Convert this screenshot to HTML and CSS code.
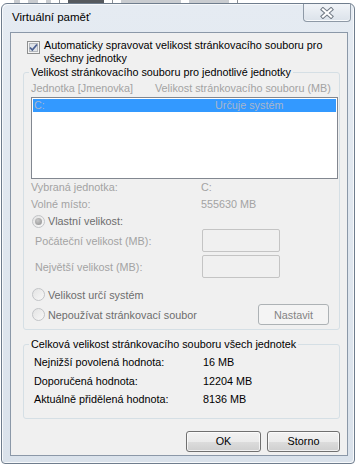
FILE: index.html
```html
<!DOCTYPE html>
<html lang="cs">
<head>
    <meta charset="UTF-8">
    <meta name="viewport" content="width=device-width, initial-scale=1.0">
    <title>Virtuální paměť</title>
    <link rel="stylesheet" href="styles.css">
</head>
<body>
    <div class="behind">
        <span class="frag" style="width: 6px;"></span>
        <span class="frag" style="width: 10px;"></span>
        <span class="frag" style="width: 5px;"></span>
        <span class="sep"></span>
        <span class="frag dark" style="width: 36px;"></span>
        <span class="sep"></span>
        <span class="frag" style="width: 60px;"></span>
        <span class="frag" style="width: 40px;"></span>
        <span class="sep"></span>
    </div>

    <div class="window">
        <div class="titlebar">
            <span class="title">Virtuální paměť</span>
            <button class="close">
                <svg width="14" height="12" viewBox="0 0 14 12">
                    <path d="M3 2.5 L11 9.5 M11 2.5 L3 9.5" stroke="#737c87" stroke-width="4.2" stroke-linecap="square"/>
                    <path d="M3 2.5 L11 9.5 M11 2.5 L3 9.5" stroke="#ffffff" stroke-width="2.2" stroke-linecap="square"/>
                </svg>
            </button>
        </div>

        <div class="client">
            <div class="check-row">
                <span class="checkbox">
                    <svg width="13" height="13" viewBox="0 0 13 13">
                        <rect x="0.5" y="0.5" width="12" height="12" fill="#f4f4f4" stroke="#8e8f8f"/>
                        <rect x="2.5" y="2.5" width="8" height="8" fill="#dfe3e8" stroke="#b4b8bd"/>
                        <path d="M3 6.5 L5.3 9 L10 3.5" fill="none" stroke="#4a5f91" stroke-width="1.8"/>
                    </svg>
                </span>
                <span class="check-text">Automaticky spravovat velikost stránkovacího souboru pro všechny jednotky</span>
            </div>

            <fieldset class="group drives">
                <legend>Velikost stránkovacího souboru pro jednotlivé jednotky</legend>
                <div class="list-head">
                    <span class="col-drive">Jednotka [Jmenovka]</span>
                    <span>Velikost stránkovacího souboru (MB)</span>
                </div>
                <div class="list">
                    <div class="list-item selected">
                        <span class="col-item">C:</span>
                        <span>Určuje systém</span>
                    </div>
                </div>

                <div class="info-row">
                    <span class="info-label">Vybraná jednotka:</span>
                    <span>C:</span>
                </div>
                <div class="info-row">
                    <span class="info-label">Volné místo:</span>
                    <span>555630 MB</span>
                </div>

                <div class="radio-row custom">
                    <span class="radio checked"></span>
                    <span>Vlastní velikost:</span>
                </div>
                <div class="size-row">
                    <span class="size-label">Počáteční velikost (MB):</span>
                    <span class="textbox"></span>
                </div>
                <div class="size-row second">
                    <span class="size-label">Největší velikost (MB):</span>
                    <span class="textbox"></span>
                </div>

                <div class="radio-row system">
                    <span class="radio"></span>
                    <span>Velikost určí systém</span>
                </div>
                <div class="radio-row none">
                    <span class="radio"></span>
                    <span>Nepoužívat stránkovací soubor</span>
                    <button class="btn set" disabled>Nastavit</button>
                </div>
            </fieldset>

            <fieldset class="group totals">
                <legend>Celková velikost stránkovacího souboru všech jednotek</legend>
                <div class="total-row">
                    <span class="total-label">Nejnižší povolená hodnota:</span>
                    <span>16 MB</span>
                </div>
                <div class="total-row">
                    <span class="total-label">Doporučená hodnota:</span>
                    <span>12204 MB</span>
                </div>
                <div class="total-row">
                    <span class="total-label">Aktuálně přidělená hodnota:</span>
                    <span>8136 MB</span>
                </div>
            </fieldset>

            <div class="actions">
                <button class="btn ok">OK</button>
                <button class="btn cancel">Storno</button>
            </div>
        </div>
    </div>
</body>
</html>
```

FILE: styles.css
```css
* {
    box-sizing: border-box;
}

body {
    margin: 0;
    width: 356px;
    height: 465px;
    overflow: hidden;
    background-color: #ffffff;
    font-family: "Liberation Sans", Arial, sans-serif;
    font-size: 10.8px;
    color: #000000;
    white-space: nowrap;
}

/* bits of the window lying behind the dialog */
.behind {
    display: flex;
    height: 3px;
    gap: 8px;
    padding-left: 14px;
}

.behind .frag {
    height: 3px;
    background-color: #c9ccd0;
}

.behind .frag.dark {
    background-color: #55595e;
}

.behind .sep {
    width: 1px;
    height: 3px;
    background-color: #8a8f95;
}

.window {
    margin-left: 1px;
    width: 354px;
    height: 461px;
    border: 1px solid #6f7d8d;
    border-radius: 6px 6px 4px 4px;
    background: linear-gradient(#e5ebf2, #dae2eb);
    box-shadow: inset 1px 1px 0 #f7f9fb, inset -1px -1px 0 #f7f9fb;
}

.titlebar {
    display: flex;
    justify-content: space-between;
    align-items: flex-start;
    height: 28px;
    padding-left: 10px;
}

.title {
    font-size: 11.5px;
    line-height: 26px;
    color: #000000;
}

.close {
    width: 48px;
    height: 18px;
    margin-right: 3px;
    padding: 0;
    display: flex;
    align-items: center;
    justify-content: center;
    border: 1px solid #8e99a6;
    border-top: none;
    border-radius: 0 0 4px 4px;
    background: linear-gradient(#f1f4f8, #dbe2ea);
    box-shadow: inset 0 -1px 0 #f8fafc;
}

.client {
    margin-left: 8px;
    width: 338px;
    height: 424px;
    border: 1px solid #8b98a8;
    background-color: #f0f0f0;
}

.check-row {
    display: flex;
    align-items: flex-start;
    gap: 4px;
    margin-top: 6px;
    padding-left: 16px;
}

.checkbox {
    display: flex;
    margin-top: 2px;
}

.check-text {
    width: 292px;
    line-height: 13px;
    white-space: normal;
}

.group {
    margin: 0 0 0 12px;
    width: 317px;
    min-width: 0;
    border: 1px solid #d5dfe5;
    border-radius: 3px;
}

.group legend {
    padding: 0 2px;
    margin-left: -2px;
    line-height: 13px;
}

.drives {
    margin-top: 1px;
    padding: 3px 1px 4px 7px;
}

.list-head {
    display: flex;
    line-height: 13px;
    color: #a3a3a3;
}

.col-drive {
    width: 124px;
}

.list {
    margin-top: 2px;
    width: 307px;
    height: 82px;
    padding: 1px;
    border: 1px solid #828790;
    background-color: #ffffff;
}

.list-item {
    display: flex;
    height: 13px;
    line-height: 13px;
    padding-left: 1px;
}

.list-item.selected {
    background-color: #3399ff;
    color: #a8b6cc;
}

.col-item {
    width: 181px;
}

.info-row {
    display: flex;
    line-height: 17px;
    color: #a3a3a3;
}

.info-row:first-of-type {
    margin-top: 1px;
}

.info-label {
    width: 170px;
}

.radio-row {
    display: flex;
    align-items: center;
    gap: 3px;
    padding-left: 1px;
    color: #6d6d6d;
}

.radio-row.custom {
    height: 16px;
}

.radio-row.system {
    height: 17px;
    margin-top: 8px;
}

.radio-row.none {
    height: 21px;
    margin-top: 1px;
}

.radio {
    position: relative;
    width: 13px;
    height: 13px;
    border: 1px solid #c2c4c7;
    border-radius: 50%;
    background: linear-gradient(135deg, #e3e3e3, #f8f8f8);
}

.radio.checked::after {
    content: "";
    position: absolute;
    left: 2px;
    top: 2px;
    width: 7px;
    height: 7px;
    border-radius: 50%;
    background: radial-gradient(circle at 40% 35%, #c9c9c9, #8f8f8f);
}

.size-row {
    display: flex;
    align-items: center;
    height: 23px;
    padding-left: 4px;
    color: #a3a3a3;
}

.size-row.second {
    margin-top: 3px;
}

.size-label {
    width: 167px;
}

.textbox {
    width: 78px;
    height: 23px;
    border: 1px solid #c4c4c4;
    border-radius: 2px;
    background-color: #f0f0f0;
}

.btn {
    height: 21px;
    padding: 0;
    font-family: inherit;
    font-size: 10.8px;
    color: #000000;
    border: 1px solid #707070;
    border-radius: 3px;
    background: linear-gradient(#f2f2f2 0%, #ebebeb 50%, #dddddd 51%, #cfcfcf 100%);
    box-shadow: inset 0 0 0 1px rgba(255, 255, 255, 0.7);
}

.btn.set {
    width: 71px;
    height: 21px;
    margin-left: auto;
    margin-right: 9px;
    color: #838383;
    border-color: #adb2b5;
    background: #f4f4f4;
    box-shadow: none;
}

.totals {
    margin-top: 8px;
    padding: 2px 1px 9px 10px;
}

.totals legend {
    margin-left: -5px;
}

.total-row {
    display: flex;
    line-height: 18.5px;
}

.total-label {
    width: 169px;
}

.actions {
    display: flex;
    justify-content: flex-end;
    gap: 6px;
    margin-top: 12px;
    padding-right: 7px;
}

.btn.ok {
    width: 75px;
}

.btn.cancel {
    width: 73px;
}
```
